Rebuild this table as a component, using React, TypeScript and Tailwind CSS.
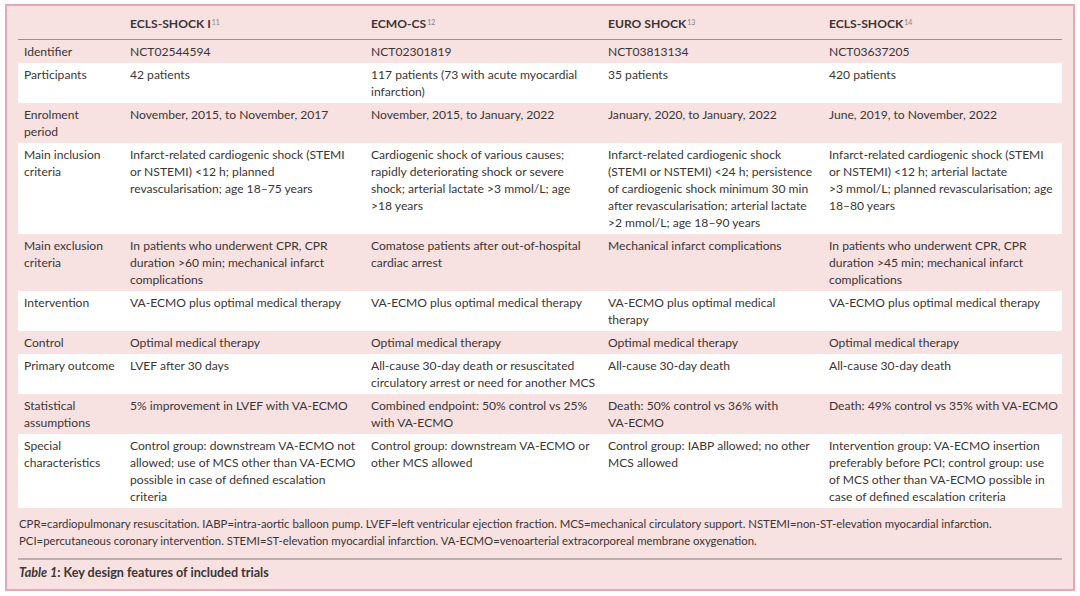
import React from 'react';

type Row = { label: string[]; cells: string[][]; white?: boolean };

const rows: Row[] = [
  { label: ['Identifier'], cells: [['NCT02544594'], ['NCT02301819'], ['NCT03813134'], ['NCT03637205']] },
  {
    label: ['Participants'],
    white: true,
    cells: [['42 patients'], ['117 patients (73 with acute myocardial', 'infarction)'], ['35 patients'], ['420 patients']],
  },
  {
    label: ['Enrolment', 'period'],
    cells: [
      ['November, 2015, to November, 2017'],
      ['November, 2015, to January, 2022'],
      ['January, 2020, to January, 2022'],
      ['June, 2019, to November, 2022'],
    ],
  },
  {
    label: ['Main inclusion', 'criteria'],
    white: true,
    cells: [
      ['Infarct-related cardiogenic shock (STEMI', 'or NSTEMI) <12 h; planned', 'revascularisation; age 18–75 years'],
      ['Cardiogenic shock of various causes;', 'rapidly deteriorating shock or severe', 'shock; arterial lactate >3 mmol/L; age', '>18 years'],
      [
        'Infarct-related cardiogenic shock',
        '(STEMI or NSTEMI) <24 h; persistence',
        'of cardiogenic shock minimum 30 min',
        'after revascularisation; arterial lactate',
        '>2 mmol/L; age 18–90 years',
      ],
      ['Infarct-related cardiogenic shock (STEMI', 'or NSTEMI) <12 h; arterial lactate', '>3 mmol/L; planned revascularisation; age', '18–80 years'],
    ],
  },
  {
    label: ['Main exclusion', 'criteria'],
    cells: [
      ['In patients who underwent CPR, CPR', 'duration >60 min; mechanical infarct', 'complications'],
      ['Comatose patients after out-of-hospital', 'cardiac arrest'],
      ['Mechanical infarct complications'],
      ['In patients who underwent CPR, CPR', 'duration >45 min; mechanical infarct', 'complications'],
    ],
  },
  {
    label: ['Intervention'],
    white: true,
    cells: [
      ['VA-ECMO plus optimal medical therapy'],
      ['VA-ECMO plus optimal medical therapy'],
      ['VA-ECMO plus optimal medical', 'therapy'],
      ['VA-ECMO plus optimal medical therapy'],
    ],
  },
  {
    label: ['Control'],
    cells: [['Optimal medical therapy'], ['Optimal medical therapy'], ['Optimal medical therapy'], ['Optimal medical therapy']],
  },
  {
    label: ['Primary outcome'],
    white: true,
    cells: [
      ['LVEF after 30 days'],
      ['All-cause 30-day death or resuscitated', 'circulatory arrest or need for another MCS'],
      ['All-cause 30-day death'],
      ['All-cause 30-day death'],
    ],
  },
  {
    label: ['Statistical', 'assumptions'],
    cells: [
      ['5% improvement in LVEF with VA-ECMO'],
      ['Combined endpoint: 50% control vs 25%', 'with VA-ECMO'],
      ['Death: 50% control vs 36% with', 'VA-ECMO'],
      ['Death: 49% control vs 35% with VA-ECMO'],
    ],
  },
  {
    label: ['Special', 'characteristics'],
    white: true,
    cells: [
      ['Control group: downstream VA-ECMO not', 'allowed; use of MCS other than VA-ECMO', 'possible in case of defined escalation', 'criteria'],
      ['Control group: downstream VA-ECMO or', 'other MCS allowed'],
      ['Control group: IABP allowed; no other', 'MCS allowed'],
      ['Intervention group: VA-ECMO insertion', 'preferably before PCI; control group: use', 'of MCS other than VA-ECMO possible in', 'case of defined escalation criteria'],
    ],
  },
];

const heads: [string, string][] = [
  ['ECLS-SHOCK I', '11'],
  ['ECMO-CS', '12'],
  ['EURO SHOCK', '13'],
  ['ECLS-SHOCK', '14'],
];

const cols = 'grid grid-cols-[106px_241px_237px_221px_240px]';

function Lines({ lines }: { lines: string[] }) {
  return (
    <div className="px-[6px] py-[3px] whitespace-nowrap">
      {lines.map((l, i) => (
        <div key={i}>{l}</div>
      ))}
    </div>
  );
}

export default function App() {
  return (
    <div className="w-[1080px] h-[596px] bg-white pl-[5px] pt-[4px] font-['Lato','Liberation_Sans',sans-serif] text-[#3b3536]">
      <div className="w-[1070px] h-[587px] border-2 border-[#e9a6b9] bg-[#f7e1e1] px-[11px] pt-[6px]">
        <div className="text-[12.1px] leading-[17px]">
          <div className={`${cols} border-b border-[#9d8f90] pb-[4px]`}>
            <div />
            {heads.map(([h, s]) => (
              <div key={h} className="px-[6px] py-[3px] font-bold">
                {h}
                <sup className="text-[7px] font-normal text-[#8a7f80] ml-px">{s}</sup>
              </div>
            ))}
          </div>
          {rows.map((r, i) => (
            <div key={i} className={`${cols} ${r.white ? 'bg-white' : ''}`}>
              <Lines lines={r.label} />
              {r.cells.map((c, j) => (
                <Lines key={j} lines={c} />
              ))}
            </div>
          ))}
        </div>
        <div className="mt-[7px] px-px text-[11.35px] leading-[17px] text-[#3b3536] whitespace-nowrap">
          <div>
            CPR=cardiopulmonary resuscitation. IABP=intra-aortic balloon pump. LVEF=left ventricular ejection fraction. MCS=mechanical circulatory support. NSTEMI=non-ST-elevation myocardial infarction.
          </div>
          <div>
            PCI=percutaneous coronary intervention. STEMI=ST-elevation myocardial infarction. VA-ECMO=venoarterial extracorporeal membrane oxygenation.
          </div>
        </div>
        <div className="mt-[9px] border-t-2 border-[#bcaeae] pt-[4px] px-px text-[12.6px] leading-[17px] font-bold">
          <span className="italic">Table 1</span>: Key design features of included trials
        </div>
      </div>
    </div>
  );
}
